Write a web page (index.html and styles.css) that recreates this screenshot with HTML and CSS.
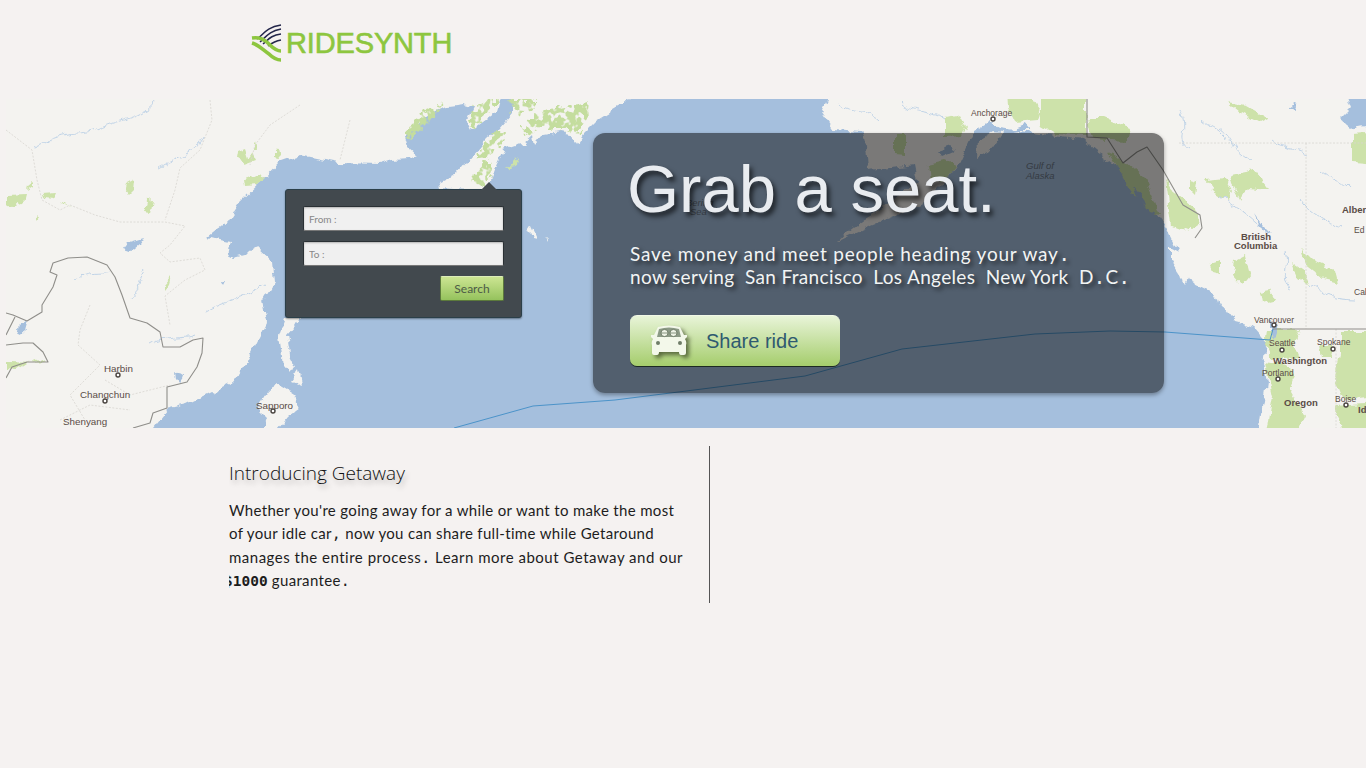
FILE: index.html
```html
<!DOCTYPE html>
<html lang="en">
<head>
  <meta charset="UTF-8" />
  <title>Ridesynth</title>
  <link rel="stylesheet" href="styles.css">
</head>
<body>
  <header class="top">
    <svg class="logo-mark" viewBox="0 0 32 38" width="32" height="38" aria-hidden="true">
      <g fill="none" stroke="#23264a" stroke-width="1.5">
        <path d="M7 15 C13 11,16 3,31 1" />
        <path d="M10 18 C16 13,19 7,31 5" />
        <path d="M13 20 C18 16,21 11,31 10" />
        <path d="M18 22 C22 19,25 17,31 16" />
      </g>
      <g fill="none" stroke="#8dc63f" stroke-width="3.6">
        <path d="M2 14 C10 13,14 15,20 21 C24 25,27 27,31 27" />
        <path d="M2 19 C9 21,13 26,19 30 C23 34,27 36,31 36" />
      </g>
    </svg>
    <span class="logo-text">RIDESYNTH</span>
  </header>

  <section class="hero">
    <!-- map drawn in page coordinates -->
    <svg class="map" viewBox="6 99 1360 329" width="1360" height="329" aria-hidden="true">
      <defs>
        <filter id="rough" filterUnits="userSpaceOnUse" x="-30" y="70" width="1430" height="390">
          <feTurbulence type="fractalNoise" baseFrequency="0.09" numOctaves="3" seed="4" />
          <feDisplacementMap in="SourceGraphic" scale="9" xChannelSelector="R" yChannelSelector="G" />
          <feGaussianBlur stdDeviation="0.35" />
        </filter>
        <filter id="patchy" filterUnits="userSpaceOnUse" x="-30" y="70" width="1430" height="390">
          <feTurbulence type="fractalNoise" baseFrequency="0.16" numOctaves="2" seed="9" result="n" />
          <feDisplacementMap in="SourceGraphic" in2="n" scale="14" xChannelSelector="R" yChannelSelector="G" result="d" />
          <feColorMatrix in="n" type="matrix" values="0 0 0 0 0  0 0 0 0 0  0 0 0 0 0  0 0 0 -9 5.6" result="holes" />
          <feComposite in="d" in2="holes" operator="in" />
          <feGaussianBlur stdDeviation="0.4" />
        </filter>
      </defs>

      <rect x="0" y="99" width="1366" height="329" fill="#a5bfdd" />

      <g fill="#f4f3f0" filter="url(#rough)">
        <path d="M-20 90 L-20 445 L140 445 L153 428 L167 410 L187 405 L207 395 L233 382 L247 362 L257 342 L267 322 L263 302 L275 282 L273 262 L257 247 L248 252 L245 255 L233 258 L227 255 L230 242 L220 240 L208 237 L227 222 L240 202 L263 180 L280 162 L300 155 L340 163 L380 164 L393 160 L410 159 L417 155 L408 147 L405 137 L417 125 L430 114 L447 106 L463 104 L473 107 L467 120 L472 130 L483 122 L497 112 L503 90 Z" />
        <path d="M511 90 L511 114 L500 127 L487 139 L473 155 L457 174 L437 184 L438 188 L470 190 L490 190 L490 180 L495 167 L503 150 L518 145 L523 144 L533 135 L535 145 L543 135 L560 132 L570 134 L577 144 L583 134 L597 120 L613 110 L632 99 L645 90 Z" />
        <path d="M832 90 L822 112 L834 130 L862 132 L866 145 L868 170 L890 168 L915 165 L918 180 L895 200 L865 218 L843 235 L837 242 L870 226 L900 214 L927 200 L943 184 L957 167 L963 154 L973 132 L985 125 L990 120 L1000 128 L1013 130 L1047 135 L1083 140 L1100 154 L1123 170 L1140 187 L1150 204 L1163 222 L1167 228 L1177 248 L1190 282 L1217 295 L1220 305 L1250 322 L1267 342 L1263 362 L1267 382 L1260 428 L1258 445 L1390 445 L1390 90 Z" />
        <path d="M978 140 L992 132 L1004 133 L992 150 L977 158 Z" />
        <path d="M285 318 L279 335 L283 365 L291 374 L296 367 L290 355 L287 335 L296 325 L300 318 Z" />
        <path d="M257 408 L277 382 L287 388 L300 407 L290 415 L277 430 L263 430 L267 418 Z" />
        <path d="M1170 248 L1185 256 L1192 272 L1185 284 L1176 270 L1170 260 Z" />
        <path d="M1219 301 L1240 310 L1262 322 L1255 327 L1235 322 Z" />
        <path d="M529 228 L532 227 L537 238 L533 237 Z" />
        <path d="M546 237 L550 241 L549 243 Z" />
        <path d="M293 380 L300 370 L303 384 Z" />
      </g>

      <g fill="#c4dd9e" filter="url(#patchy)">
        <!-- far east -->
        <path d="M405 135 L410 125 L418 120 L425 110 L445 103 L432 120 L420 130 L411 142 Z M470 122 L476 105 L490 99 L499 99 L488 114 L472 128 Z" />
        <path d="M477 156 L490 136 L502 130 L506 135 L496 150 L482 160 Z M472 175 L488 160 L492 172 L484 186 L474 182 Z M510 99 L538 99 L530 110 L514 112 Z M522 128 L545 110 L570 105 L590 102 L587 122 L577 134 L560 128 L540 128 L526 136 Z" />
      </g>
      <g fill="#cde2aa" filter="url(#rough)">
        <path d="M6 196 L25 195 L23 203 L12 206 L6 204 Z M28 186 L33 182 L33 186 L27 190 Z M42 194 L55 193 L52 200 L44 199 Z M62 202 L70 208 L64 205 Z M126 185 L135 180 L134 191 L130 195 L125 189 Z M147 201 L153 200 L151 212 L144 211 Z M37 218 L41 217 L37 222 Z" />
        <path d="M237 152 L245 149 L248 158 L252 152 L256 160 L245 164 L236 158 Z M254 143 L256 141 L258 150 L254 150 Z M275 150 L279 148 L281 158 L275 157 Z M244 180 L262 173 L266 178 L258 185 L245 186 Z M165 285 L172 277 L170 285 L165 291 Z M8 361 L32 362 L42 358 L47 361 L28 362 L16 370 L8 369 Z M508 169 L517 158 L516 166 Z" />
        <!-- alaska -->
        <path d="M945 118 L960 115 L967 128 L962 137 L945 138 Z M1007 90 L1025 90 L1040 112 L1038 120 L1015 122 L1008 108 Z M1040 90 L1086 90 L1086 135 L1055 134 L1040 125 Z M1088 118 L1105 118 L1130 128 L1127 142 L1092 140 Z M895 133 L906 133 L906 155 L895 154 Z M928 165 L945 161 L957 166 L948 178 L930 183 Z M1108 152 L1125 160 L1145 178 L1160 215 L1150 212 L1130 190 Z" />
        <!-- canada / us -->
        <path d="M1228 102 L1245 105 L1268 118 L1260 122 L1240 112 Z M1352 134 L1366 133 L1380 165 L1352 163 Z M1166 180 L1175 195 L1196 210 L1200 225 L1190 232 L1172 225 Z M1190 180 L1197 182 L1195 195 L1190 190 Z M1205 180 L1225 178 L1232 190 L1228 200 L1215 192 Z M1230 175 L1255 170 L1270 190 L1248 188 L1240 200 L1232 185 Z M1300 248 L1312 260 L1335 270 L1338 282 L1322 278 L1305 265 Z M1292 263 L1305 272 L1310 285 L1298 278 Z M1235 260 L1245 255 L1250 275 L1242 285 L1233 275 Z M1260 292 L1270 290 L1275 300 L1262 303 Z M1210 265 L1220 262 L1220 272 L1212 270 Z" />
        <path d="M1267 330 L1300 330 L1295 345 L1300 358 L1272 360 L1265 345 Z M1340 332 L1380 332 L1380 395 L1345 400 L1335 375 L1340 355 Z M1265 362 L1285 365 L1295 375 L1290 390 L1305 415 L1295 440 L1265 440 L1272 395 Z M1320 345 L1332 345 L1330 358 L1322 358 Z M1335 405 L1380 402 L1380 440 L1345 440 Z" />
      </g>

      <g fill="#a5bfdd" filter="url(#rough)">
        <path d="M130 242 L144 238 L140 244 L130 252 L124 250 Z M20 326 L25 322 L22 333 L18 335 Z M175 371 L183 376 L180 385 L176 380 Z M220 282 L224 282 L222 286 Z M1345 90 L1380 90 L1380 122 L1350 128 L1340 120 L1352 108 Z M1290 108 L1296 104 L1294 110 Z M1255 215 L1262 225 L1272 235 L1262 230 Z M1270 320 L1278 326 L1274 338 L1270 330 Z M975 132 L990 123 L1000 116 L993 122 L985 130 Z M1010 130 L1025 124 L1030 130 Z M1133 186 L1143 198 L1147 208 L1138 200 Z M937 150 L950 146 L956 150 L942 156 Z" />
      </g>

      <g fill="none" stroke="#b4cbe4" stroke-width="0.8" filter="url(#rough)">
        <path d="M154 100 C145 120,120 118,100 128 C85 136,60 130,45 142 L33 148" />
        <path d="M205 135 C200 150,175 160,160 168" />
        <path d="M205 312 C225 300,240 300,265 285" />
        <path d="M130 300 C140 290,138 280,145 270" />
        <path d="M75 280 C90 270,100 275,112 272" />
        <path d="M150 345 C165 335,185 340,195 335" />
        <path d="M840 105 C850 115,870 108,880 120 M900 102 C910 115,930 108,945 120 M1180 110 C1190 130,1175 140,1190 150 M1220 195 C1240 210,1255 220,1268 235 M1300 200 C1310 215,1330 225,1345 228 M1270 140 C1280 150,1295 145,1310 155 M1220 130 C1235 140,1230 150,1250 160 M1310 285 C1325 295,1335 300,1355 300 M1200 120 C1210 130,1220 128,1225 140 M1320 170 C1330 180,1340 178,1350 190 M1285 250 C1290 265,1280 275,1290 290" />
      </g>

      <g fill="none" stroke="#d8d6d0" stroke-width="0.8" stroke-dasharray="2 1.5">
        <path d="M6 130 L32 150 L37 180 L42 200 L60 210 L70 205 L95 215 L120 222 L165 222 L185 226 L170 245 L160 253 L170 262 L200 258 L205 270 L185 280 L165 296 L170 325" />
        <path d="M210 100 L212 120 L200 150 L180 168 L175 190 L165 220" />
        <path d="M90 305 L80 330 L78 345 L100 365 L85 380 L70 395 L85 420 M105 380 L130 395 L170 385 M60 420 L90 405 L130 410" />
        <path d="M1179 143 L1366 143 M1306 143 L1306 329 M1336 329 L1336 428" />
        <path d="M300 105 L270 125 L255 145 L250 165 M350 120 L340 160" />
      </g>

      <g fill="none" stroke="#8f8e8a" stroke-width="1.1" stroke-linejoin="round">
        <path d="M6 313 L13 315 L27 321 L42 312 L42 305 L53 287 L57 275 L50 272 L53 263 L68 258 L87 257 L107 265 L115 277 L122 295 L130 318 L147 323 L160 332 L163 347 L180 347 L193 340 L203 338 L202 353 L197 367 L187 382 L167 387 L167 408 L153 413 L150 423 L133 428" />
        <path d="M15 317 L6 335 M6 345 L23 343 L33 343 L43 352 L48 362 L27 362 L12 367 L6 378" />
        <path d="M1087 99 L1087 137 L1107 138 L1123 163 L1137 152 L1147 147 L1163 170 L1183 205 L1200 215 L1202 228 L1195 238" />
        <path d="M1273 329 L1366 329" />
      </g>

      <polyline class="route" points="454,428 533,406 615,400 805,376 902,349 1035,334 1110,331 1165,332 1270,340 1273,329" />

      <g class="map-labels asia">
        <text x="104" y="372">Harbin</text>
        <text x="80" y="398">Changchun</text>
        <text x="63" y="425">Shenyang</text>
        <text x="256" y="409">Sapporo</text>
      </g>
      <g class="map-labels">
        <text x="971" y="116">Anchorage</text>
        <text x="1254" y="323">Vancouver</text>
        <text x="1269" y="346">Seattle</text>
        <text x="1317" y="345">Spokane</text>
        <text x="1262" y="376">Portland</text>
        <text x="1335" y="402">Boise</text>
        <text x="1354" y="233">Ed</text>
        <text x="1354" y="295">Cal</text>
      </g>
      <g class="map-labels bold">
        <text x="1241" y="240">British</text>
        <text x="1234" y="249">Columbia</text>
        <text x="1342" y="213">Alber</text>
        <text x="1273" y="364">Washington</text>
        <text x="1284" y="406">Oregon</text>
        <text x="1358" y="413">Id</text>
      </g>
      <g class="map-labels sea">
        <text x="1026" y="169">Gulf of</text>
        <text x="1026" y="179">Alaska</text>
        <text x="686" y="206">Bering</text>
        <text x="690" y="215">Sea</text>
      </g>
      <g fill="#fff" stroke="#4a4440" stroke-width="1.4">
        <circle cx="993" cy="119" r="2" />
        <circle cx="118" cy="375" r="2" />
        <circle cx="105" cy="401" r="2" />
        <circle cx="273" cy="411" r="2" />
        <circle cx="1274" cy="325" r="2" />
        <circle cx="1282" cy="350" r="2" />
        <circle cx="1333" cy="349" r="2" />
        <circle cx="1278" cy="379" r="2" />
        <circle cx="1346" cy="405" r="2" />
      </g>
    </svg>

    <form class="search-box">
      <input class="search-input" placeholder="From :" />
      <input class="search-input" placeholder="To :" />
      <button class="search-btn" type="button">Search</button>
    </form>

    <div class="promo">
      <h1 class="promo-title">Grab a seat.</h1>
      <p class="promo-text"><span class="promo-line">Save money and meet people heading your way<span class="fb">.</span></span><br>now serving&nbsp; San Francisco&nbsp; Los Angeles&nbsp; New York&nbsp; D<span class="fb">.</span>C<span class="fb">.</span></p>
      <button class="share-btn" type="button">
        <svg class="car" viewBox="0 0 38 32" width="38" height="32" aria-hidden="true">
          <path fill="#f3f8ea" d="M8 2 Q19 -1 30 2 L34 10 L37 10 L37 12 L35 14 Q37 17 36 20 L36 28 Q36 30 34 30 L31 30 Q29 30 29 27 L9 27 Q9 30 7 30 L4 30 Q2 30 2 28 L2 20 Q1 17 3 14 L1 12 L1 10 L4 10 Z" />
          <path fill="#8c9a86" d="M9 4 Q19 1 29 4 L31 12 L7 12 Z" />
          <circle cx="14.5" cy="8" r="3.6" fill="#eef3e6" stroke="#6f7d68" />
          <circle cx="23.5" cy="8" r="3.6" fill="#eef3e6" stroke="#6f7d68" />
          <path stroke="#6f7d68" stroke-width="0.8" d="M11 8 H18 M20 8 H27" />
          <circle cx="8" cy="18" r="2" fill="#6f7d68" />
          <circle cx="30" cy="18" r="2" fill="#6f7d68" />
        </svg>
        <span>Share ride</span>
      </button>
    </div>
  </section>

  <section class="intro">
    <div class="intro-col">
      <h2 class="intro-title">Introducing Getaway</h2>
      <p class="intro-text">Whether you're going away for a while or want to make the most<br>of your idle car<span class="fb">,</span> now you can share full-time while Getaround<br><span class="intro-wide">manages the entire process<span class="fb">.</span> Learn more about Getaway and our</span><br><span class="fb money">$1000</span> guarantee<span class="fb">.</span></p>
    </div>
  </section>
</body>
</html>
```

FILE: styles.css
```css
body {
  margin: 0;
  background: #f5f2f1;
  font-family: "Lato", "Liberation Sans", sans-serif;
}

.top {
  display: flex;
  align-items: flex-start;
  gap: 4px;
  height: 75px;
  padding: 24px 0 0 250px;
}
.logo-mark {
  flex: none;
}
.logo-text {
  margin-top: 3px;
  font-family: "Liberation Sans", sans-serif;
  font-size: 29px;
  line-height: 33px;
  letter-spacing: -0.15px;
  color: #8dc63f;
  -webkit-text-stroke: 0.6px #8dc63f;
}

.hero {
  position: relative;
  height: 329px;
  margin-left: 6px;
  overflow: hidden;
}
.map {
  display: block;
}
.route {
  fill: none;
  stroke: #4b93c9;
  stroke-width: 1;
}
.map-labels text {
  font-family: "Liberation Sans", sans-serif;
  font-size: 8.5px;
  fill: #5a4c46;
}
.map-labels.asia text {
  font-size: 9.8px;
}
.map-labels.bold text {
  font-weight: bold;
  font-size: 9.5px;
}
.map-labels.sea text {
  font-style: italic;
  font-size: 9.5px;
  fill: #6a7686;
}

.search-box {
  position: absolute;
  left: 279px;
  top: 90px;
  width: 237px;
  height: 129px;
  box-sizing: border-box;
  padding: 16px 17px 0;
  background: #42494e;
  border: 1px solid #2b3f49;
  border-radius: 3px;
  box-shadow: 0 1px 2px rgba(0, 0, 0, 0.4);
  display: flex;
  flex-direction: column;
  gap: 10px;
}
.search-box::before {
  content: "";
  position: absolute;
  top: -8px;
  left: 195px;
  border-left: 8px solid transparent;
  border-right: 8px solid transparent;
  border-bottom: 8px solid #42494e;
}
.search-input {
  height: 25px;
  box-sizing: border-box;
  padding: 0 5px;
  font-family: inherit;
  font-size: 10px;
  background: #f0f0f0;
  border: 1px solid #2a3034;
  border-bottom-color: #777;
  border-radius: 2px;
  box-shadow: inset 0 1px 2px rgba(0, 0, 0, 0.25);
}
.search-input::placeholder {
  color: #888;
  opacity: 1;
}
.search-btn {
  align-self: flex-end;
  width: 64px;
  height: 25px;
  padding: 0;
  font-family: inherit;
  font-size: 12px;
  color: #4d5b46;
  background: linear-gradient(#cce592, #95c25d);
  border: 1px solid #5c7a3c;
  border-top-color: #dcedb8;
  border-radius: 2px;
}

.promo {
  position: absolute;
  left: 587px;
  top: 34px;
  width: 571px;
  height: 260px;
  box-sizing: border-box;
  padding: 0 0 0 37px;
  background: rgba(0, 0, 0, 0.5);
  border-radius: 12px;
  box-shadow: 0 2px 4px rgba(0, 0, 0, 0.35);
}
.promo-title {
  margin: 17px 0 0 -3px;
  font-family: "Liberation Sans", sans-serif;
  font-weight: normal;
  font-size: 67px;
  line-height: 78px;
  color: #e9ecf0;
  text-shadow: 3px 4px 5px rgba(0, 0, 0, 0.65);
}
.promo-text {
  margin: 14px 0 0;
  font-size: 19px;
  line-height: 23px;
  letter-spacing: 0.35px;
  color: #f2f4f4;
  text-shadow: 3px 3px 4px rgba(0, 0, 0, 0.6);
  white-space: nowrap;
}
.promo-line {
  letter-spacing: 0.78px;
}
.fb {
  font-family: "DejaVu Sans Mono", monospace;
  line-height: 1;
}
.share-btn {
  display: flex;
  align-items: center;
  gap: 18px;
  width: 210px;
  height: 51px;
  margin-top: 27px;
  padding: 0 0 0 20px;
  font-family: "Liberation Sans", sans-serif;
  font-size: 20px;
  color: #2f5a70;
  background: linear-gradient(#e8f4d8, #a5cd6c);
  border: 0;
  border-top: 1px solid #f1f8e6;
  border-radius: 7px;
  box-shadow: 0 1px 0 #1c2a22;
}
.car {
  flex: none;
  filter: drop-shadow(3px 3px 2px rgba(50, 60, 30, 0.7));
}

.intro {
  margin: 18px 0 0 229px;
}
.intro-col {
  width: 480px;
  height: 157px;
  border-right: 1px solid #555;
  overflow: hidden;
}
.intro-title {
  margin: 14px 0 0;
  font-family: "Open Sans", sans-serif;
  font-weight: 300;
  font-size: 19px;
  line-height: 26px;
  color: #111;
  text-shadow: 2px 4px 5px rgba(0, 0, 0, 0.25);
}
.intro-text {
  margin: 13px 0 0;
  overflow: hidden;
  font-size: 15px;
  line-height: 23.3px;
  letter-spacing: 0.33px;
  color: #1d1d1d;
  white-space: nowrap;
}
.intro-wide {
  letter-spacing: 0.5px;
}
.money {
  margin-left: -5px;
  font-size: 14.5px;
  font-weight: bold;
  letter-spacing: 0;
}
```
